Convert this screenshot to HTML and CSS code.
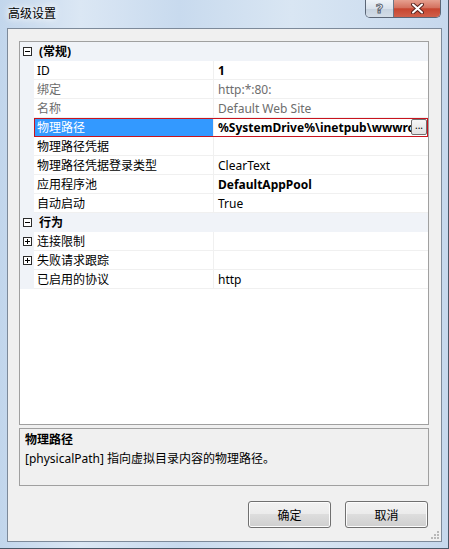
FILE: index.html
```html
<!DOCTYPE html>
<html lang="zh-CN">
<head>
  <meta charset="UTF-8">
  <title>高级设置</title>
  <link rel="stylesheet" href="styles.css">
</head>
<body>
  <div class="window">
    <div class="titlebar">
      <span class="title">高级设置</span>
      <div class="caption">
        <span class="cap help">?</span>
        <span class="cap close">
          <svg width="13" height="11" viewBox="0 0 13 11">
            <path d="M2 1.5 L11 9.5 M11 1.5 L2 9.5" stroke="#5a2620" stroke-width="4" stroke-linecap="round"/>
            <path d="M2 1.5 L11 9.5 M11 1.5 L2 9.5" stroke="#fff" stroke-width="2" stroke-linecap="round"/>
          </svg>
        </span>
      </div>
    </div>

    <div class="client">
      <div class="grid">
        <div class="row cat">
          <span class="gutter"><span class="toggle minus"></span></span>
          <div class="cells"><span class="name">(常规)</span></div>
        </div>
        <div class="row">
          <span class="gutter"></span>
          <div class="cells"><span class="name">ID</span><span class="value bold">1</span></div>
        </div>
        <div class="row readonly">
          <span class="gutter"></span>
          <div class="cells"><span class="name">绑定</span><span class="value">http:*:80:</span></div>
        </div>
        <div class="row readonly">
          <span class="gutter"></span>
          <div class="cells"><span class="name">名称</span><span class="value">Default Web Site</span></div>
        </div>
        <div class="row sel">
          <span class="gutter"></span>
          <div class="cells">
            <span class="name">物理路径</span>
            <span class="value bold"><span class="clip">%SystemDrive%\inetpub\wwwroot</span><span class="ellipsis">...</span></span>
          </div>
        </div>
        <div class="row">
          <span class="gutter"></span>
          <div class="cells"><span class="name">物理路径凭据</span><span class="value"></span></div>
        </div>
        <div class="row">
          <span class="gutter"></span>
          <div class="cells"><span class="name">物理路径凭据登录类型</span><span class="value">ClearText</span></div>
        </div>
        <div class="row">
          <span class="gutter"></span>
          <div class="cells"><span class="name">应用程序池</span><span class="value bold">DefaultAppPool</span></div>
        </div>
        <div class="row">
          <span class="gutter"></span>
          <div class="cells"><span class="name">自动启动</span><span class="value">True</span></div>
        </div>
        <div class="row cat">
          <span class="gutter"><span class="toggle minus"></span></span>
          <div class="cells"><span class="name">行为</span></div>
        </div>
        <div class="row">
          <span class="gutter"><span class="toggle plus"></span></span>
          <div class="cells"><span class="name">连接限制</span><span class="value"></span></div>
        </div>
        <div class="row">
          <span class="gutter"><span class="toggle plus"></span></span>
          <div class="cells"><span class="name">失败请求跟踪</span><span class="value"></span></div>
        </div>
        <div class="row">
          <span class="gutter"></span>
          <div class="cells"><span class="name">已启用的协议</span><span class="value">http</span></div>
        </div>
      </div>

      <div class="desc">
        <div class="desc-title">物理路径</div>
        <div class="desc-text">[physicalPath] 指向虚拟目录内容的物理路径。</div>
      </div>

      <div class="buttons">
        <button class="btn">确定</button>
        <button class="btn">取消</button>
      </div>

      <svg class="grip" width="10" height="10" viewBox="0 0 10 10">
        <rect x="7" y="1" width="2" height="2" fill="#b8b8b8"/>
        <rect x="4" y="4" width="2" height="2" fill="#b8b8b8"/>
        <rect x="7" y="4" width="2" height="2" fill="#b8b8b8"/>
        <rect x="1" y="7" width="2" height="2" fill="#b8b8b8"/>
        <rect x="4" y="7" width="2" height="2" fill="#b8b8b8"/>
        <rect x="7" y="7" width="2" height="2" fill="#b8b8b8"/>
      </svg>
    </div>
  </div>
</body>
</html>
```

FILE: styles.css
```css
body {
  margin: 0;
  font-family: "Noto Sans", "Noto Sans CJK SC", sans-serif;
  font-size: 12px;
  color: #000;
}
.window {
  width: 449px;
  height: 549px;
  box-sizing: border-box;
  padding: 0 6px 6px 7px;
  display: flex;
  flex-direction: column;
  background: linear-gradient(to right, #c2d6ec 0%, #dbe7f4 18%, #c8daee 40%, #d9e6f3 65%, #c6d8ed 100%);
  border-right: 1px solid #4b5767;
  border-bottom: 1px solid #4b5767;
}
.titlebar {
  height: 28px;
  display: flex;
  justify-content: space-between;
  align-items: flex-start;
}
.title {
  margin: 6px 0 0 1px;
  line-height: 16px;
  text-shadow: 0 0 6px #fff, 0 0 10px #fff;
}
.caption {
  display: flex;
  margin-right: 1px;
  border: 1px solid #5b6676;
  border-top: none;
  border-radius: 0 0 5px 5px;
  overflow: hidden;
}
.cap {
  height: 17px;
  display: flex;
  align-items: center;
  justify-content: center;
}
.help {
  width: 27px;
  border-right: 1px solid #6c7787;
  background: linear-gradient(#eef3f8, #d9e2ec 50%, #c6d2df 51%, #d4dde7);
  font-family: "DejaVu Sans", sans-serif;
  font-weight: bold;
  font-size: 13px;
  color: #f4f6f8;
  -webkit-text-stroke: 1px #5d6570;
}
.close {
  width: 46px;
  background: linear-gradient(#e6a08f, #d4725f 45%, #c7452f 52%, #d0604a);
}
.client {
  flex: 1;
  position: relative;
  display: flex;
  flex-direction: column;
  padding: 12px 12px 0 11px;
  background: #f0f0f0;
  border: 1px solid #7d8a9a;
}
.grid {
  height: 384px;
  box-sizing: border-box;
  background: #fff;
  border: 1px solid #a0a0a0;
}
.row {
  display: flex;
  height: 19px;
}
.gutter {
  width: 14px;
  flex: none;
  display: flex;
  align-items: center;
  justify-content: center;
  background: #f0f3f8;
}
.toggle {
  position: relative;
  width: 7px;
  height: 7px;
  border: 1px solid #2b2b2b;
  background: #fff;
}
.toggle::before {
  content: "";
  position: absolute;
  left: 1px;
  top: 3px;
  width: 5px;
  height: 1px;
  background: #000;
}
.plus::after {
  content: "";
  position: absolute;
  left: 3px;
  top: 1px;
  width: 1px;
  height: 5px;
  background: #000;
}
.cells {
  flex: 1;
  display: flex;
  min-width: 0;
  border-bottom: 1px solid #f0f0f0;
}
.name {
  width: 180px;
  flex: none;
  padding: 2px 0 0 3px;
  box-sizing: border-box;
  border-right: 1px solid #f0f0f0;
  line-height: 16px;
  white-space: nowrap;
  overflow: hidden;
}
.value {
  flex: 1;
  min-width: 0;
  padding: 2px 0 0 4px;
  line-height: 16px;
  white-space: nowrap;
  overflow: hidden;
}
.bold {
  font-weight: bold;
}
.cat .cells {
  background: #f0f3f8;
  border-bottom-color: #f0f3f8;
}
.cat .name {
  width: auto;
  border-right: none;
  padding-left: 5px;
  font-weight: bold;
}
.readonly .name,
.readonly .value {
  color: #6d6d6d;
}
.sel .cells {
  outline: 1px solid #c8141e;
  outline-offset: -1px;
}
.sel .name {
  background: #3399ff;
  color: #fff;
}
.sel .value {
  display: flex;
  padding-right: 1px;
}
.clip {
  flex: 1;
  min-width: 0;
  overflow: hidden;
}
.ellipsis {
  width: 14px;
  height: 14px;
  margin-top: -1px;
  flex: none;
  border: 1px solid #707070;
  border-radius: 2px;
  background: linear-gradient(#f6f6f6, #e2e2e2);
  font-size: 10px;
  line-height: 10px;
  text-align: center;
  font-weight: normal;
}
.desc {
  height: 58px;
  margin-top: 3px;
  box-sizing: border-box;
  padding: 3px 5px;
  border: 1px solid #a0a0a0;
}
.desc-title {
  font-weight: bold;
  line-height: 16px;
}
.desc-text {
  margin-top: 3px;
  line-height: 16px;
}
.buttons {
  display: flex;
  justify-content: flex-end;
  gap: 14px;
  margin: 15px 1px 0 0;
}
.btn {
  width: 83px;
  height: 27px;
  font-family: "Noto Sans", "Noto Sans CJK SC", sans-serif;
  font-size: 12px;
  color: #000;
  border: 1px solid #707070;
  border-radius: 3px;
  background: linear-gradient(#f2f2f2, #ebebeb 49%, #dddddd 50%, #cfcfcf);
  box-shadow: inset 0 0 0 1px #fcfcfc;
}
.grip {
  position: absolute;
  right: 1px;
  bottom: 1px;
}
```
